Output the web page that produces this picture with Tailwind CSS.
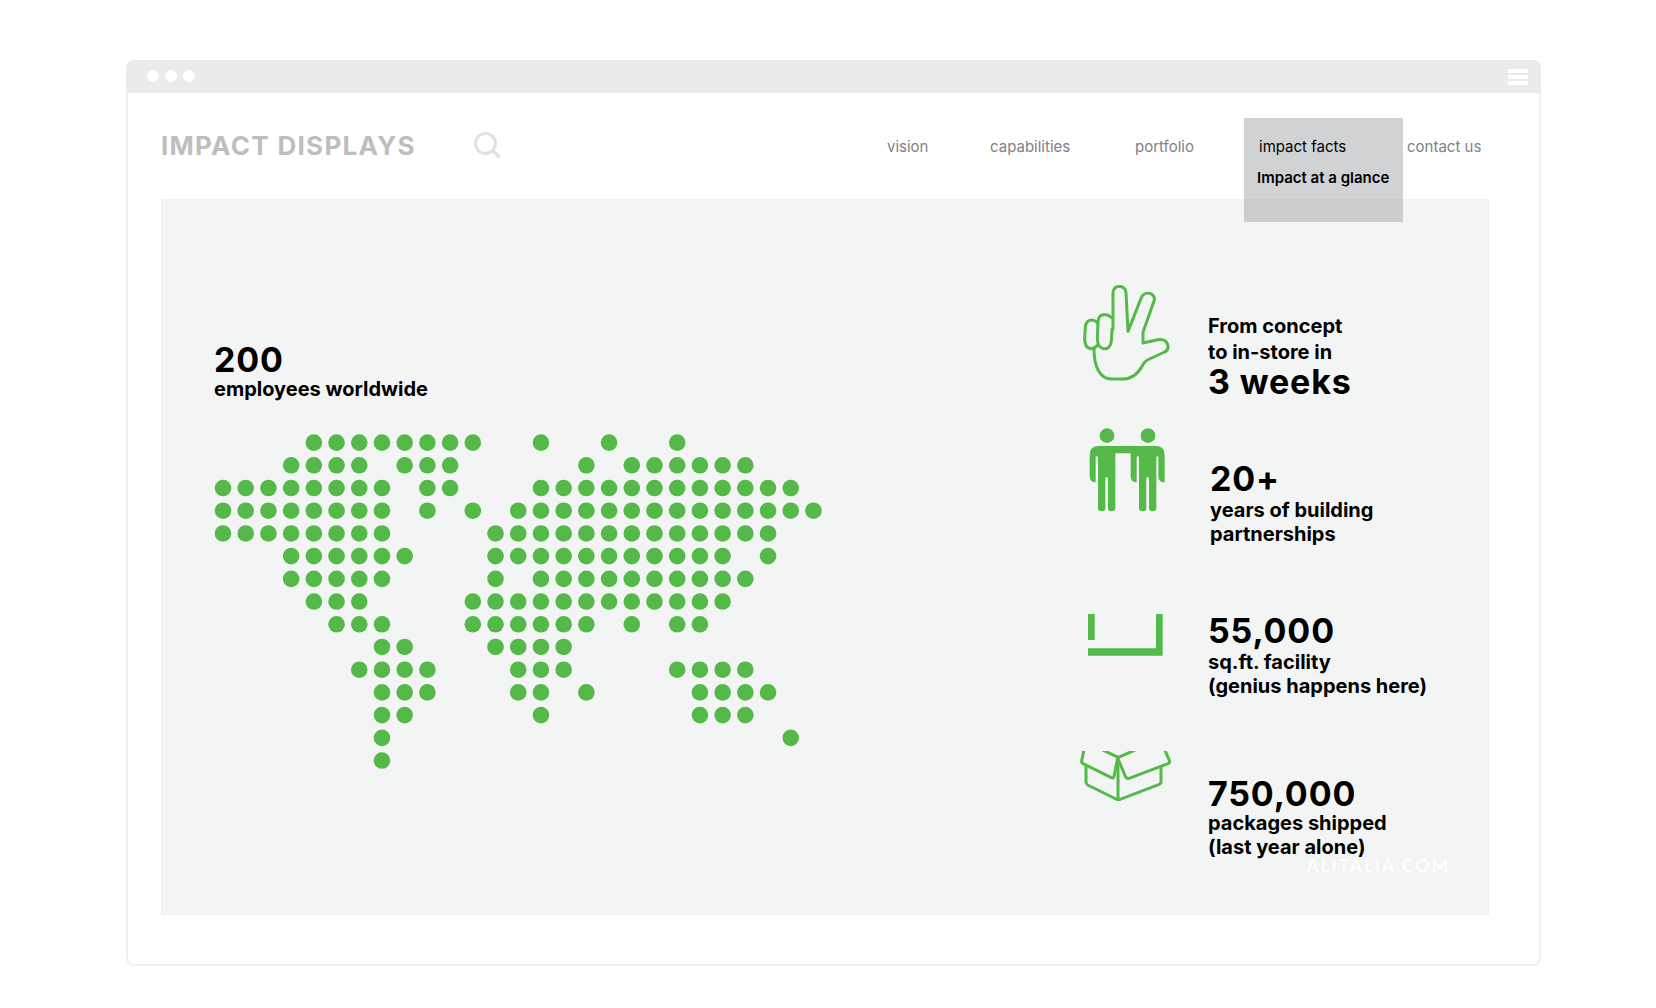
<!DOCTYPE html>
<html lang="en">
<head>
    <meta charset="UTF-8">
    <meta name="viewport" content="width=device-width, initial-scale=1.0">
    <title>Impact Displays - Impact at a glance</title>
    <script src="https://cdn.jsdelivr.net/npm/@tailwindcss/browser@4"></script>
</head>
<body class="bg-white text-black font-['Inter','Open_Sans',sans-serif] pt-[60px] pb-10 pl-[126px] pr-[115px]">
    <div class="rounded-lg border-x-2 border-b-2 border-[#f0f0f1]">
        <!-- window bar -->
        <div class="-mx-0.5 h-[33px] rounded-t-lg bg-[#eaebed] flex items-center justify-between pl-[21px] pr-[13px]">
            <div class="flex gap-1.5 pb-0.5">
                <span class="size-3 rounded-full bg-white"></span>
                <span class="size-3 rounded-full bg-white"></span>
                <span class="size-3 rounded-full bg-white"></span>
            </div>
            <button type="button" aria-label="Menu" class="flex flex-col gap-0.5">
                <span class="h-1 w-5 bg-white"></span>
                <span class="h-1 w-5 bg-white"></span>
                <span class="h-1 w-5 bg-white"></span>
            </button>
        </div>

        <header class="h-[106px] pl-[33px] pr-14 flex items-start justify-between">
            <div class="flex items-center gap-[57px] pt-9">
                <h1 class="text-[26px] leading-[34px] font-bold tracking-wider text-[#bdbec0]">IMPACT DISPLAYS</h1>
                <button type="button" aria-label="Search" class="pb-0.5">
                    <svg class="w-7 h-7" viewBox="0 0 28 28" fill="none" stroke="#e1e2e3" stroke-width="3">
                        <circle cx="12.5" cy="12.5" r="10"/>
                        <path d="M19.5 19.5l7 7" stroke-width="3.5"/>
                    </svg>
                </button>
            </div>
            <nav class="pt-[25px] text-[15px] leading-5 text-[#808184]">
                <ul class="grid grid-cols-[103px_145px_109px_163px_76px]">
                    <li class="pt-[19px]"><a href="#">vision</a></li>
                    <li class="pt-[19px]"><a href="#">capabilities</a></li>
                    <li class="pt-[19px]"><a href="#">portfolio</a></li>
                    <li class="relative">
                        <div class="absolute top-0 left-0 z-10 w-[159px] h-[104px] bg-[#a3a5a9]/50 pt-[19px] pl-[13px] text-black whitespace-nowrap">
                            <a href="#" class="block pl-0.5">impact facts</a>
                            <a href="#" class="block pt-[11px] font-semibold">Impact at a glance</a>
                        </div>
                    </li>
                    <li class="pt-[19px] whitespace-nowrap"><a href="#">contact us</a></li>
                </ul>
            </nav>
        </header>

        <main class="relative ml-[33px] mr-[50px] mb-[49px] min-h-[716px] border border-[#f0f1f1] bg-[#f3f5f5] flex justify-between">
            <section class="pl-[52px] pt-[143px]">
                <h2 class="text-[34px] leading-[34px] font-bold tracking-wide">200</h2>
                <p class="text-xl leading-6 font-bold">employees worldwide</p>
                <svg id="map" class="mt-[33px] w-[608px] h-[335px]" viewBox="0 0 608 335" fill="#54b948" role="img" aria-label="World map"></svg>
            </section>

            <section class="w-[408px] pt-[85px]">
                <div class="flex h-[143px]">
                    <div class="w-32">
                        <svg class="w-24 h-24" viewBox="30 48 288 288" fill="none" stroke="#54b948" stroke-width="9" stroke-linejoin="round" stroke-linecap="round">
                            <path d="M129 180V71C129 46 167 46 168 71L174 187L213 88C224 61 260 73 252 96L219 190V222L263 212C282 208 293 219 294 231C295 241 291 246 284 249L232 273C224 277 222 281 217 290C203 316 184 330 158 330H124C90 330 72 294 72 240"/>
                            <path d="M125 146C110 133 86 131 84 158L82 209C82 246 120 250 124 217L126 181"/>
                            <path d="M82 160C65 147 48 153 46 174L44 208C44 232 53 239 64 239C73 239 78 235 82 228"/>
                        </svg>
                    </div>
                    <div class="pt-7">
                        <p class="text-xl leading-[26px] font-bold">From concept<br>to in-store in</p>
                        <h2 class="text-[34px] leading-[34px] font-bold tracking-wide">3 weeks</h2>
                    </div>
                </div>

                <div class="flex h-[186px]">
                    <div class="w-[130px]">
                        <svg class="w-24 h-[84px]" viewBox="30 27 288 252" fill="#54b948">
                            <circle cx="111" cy="50" r="22"/>
                            <circle cx="234" cy="50" r="22"/>
                            <path d="M86 81H258Q284 81 284 108V190Q265 190 265 172V116Q265 112 262 112Q259 112 259 116V267Q259 277 248 277Q237 277 237 267V179Q237 174 233 174Q229 174 229 179V267Q229 277 218 277Q207 277 207 267V116Q207 112 204 112Q200 112 200 116V190Q182 190 182 172V103H136V267Q136 277 125 277Q114 277 114 267V179Q114 174 110 174Q106 174 106 179V267Q106 277 95 277Q84 277 84 267V116Q84 112 80 112Q77 112 77 116V190Q59 190 59 172V108Q59 81 86 81Z"/>
                        </svg>
                    </div>
                    <div class="pt-[34px]">
                        <h2 class="text-[34px] leading-[34px] font-bold tracking-wide">20+</h2>
                        <p class="pt-0.5 text-xl leading-6 font-bold">years of building<br>partnerships</p>
                    </div>
                </div>

                <div class="flex h-[137px]">
                    <div class="w-32">
                        <svg class="w-24 h-[42px]" viewBox="30 45 288 126" fill="#54b948">
                            <path d="M54 45h20v78H54zM258 45h20v125H54v-22h204z"/>
                        </svg>
                    </div>
                    <div>
                        <h2 class="text-[34px] leading-[34px] font-bold tracking-wide">55,000</h2>
                        <p class="pt-0.5 text-xl leading-6 font-bold">sq.ft. facility<br>(genius happens here)</p>
                    </div>
                </div>

                <div class="flex">
                    <div class="w-32">
                        <svg class="w-24 h-[50px]" viewBox="30 36 288 150" fill="none" stroke="#54b948" stroke-width="9" stroke-linejoin="round">
                            <path d="M42 32L35 66Q34 71 39 74L124 116Q131 119 132 112L143 57L166 112Q169 120 177 118L294 74Q301 71 298 64L284 32"/>
                            <path d="M96 32L145 55L198 32M144 56V182M48 78V130Q48 135 53 138L138 180Q144 183 150 181L266 137Q273 134 273 128V82"/>
                        </svg>
                    </div>
                    <div class="pt-[26px]">
                        <h2 class="text-[34px] leading-[34px] font-bold tracking-wide">750,000</h2>
                        <p class="text-xl leading-6 font-bold">packages shipped<br>(last year alone)</p>
                    </div>
                </div>
            </section>

            <span class="absolute right-[38px] bottom-[37px] text-lg leading-6 font-medium tracking-widest text-white font-['Lato',sans-serif]">ALITALIA.COM</span>
        </main>
    </div>

    <script>
        // one string per latitude, "o" is a dot
        const rows = [
            "....oooooooo..o..o..o......",
            "...oooo.ooo.....o.oooooo...",
            "oooooooo.oo...oooooooooooo.",
            "oooooooo.o.o.oooooooooooooo",
            "oooooooo....ooooooooooooo..",
            "...oooooo...ooooooooooo.o..",
            "...ooooo....o.oooooooooo...",
            "....ooo....oooooooooooo....",
            ".....ooo...oooooo.o.oo.....",
            ".......oo...oooo...........",
            "......oooo...ooo....oooo...",
            ".......ooo...oo.o....oooo..",
            ".......oo.....o......ooo...",
            ".......o.................o.",
            ".......o..................."
        ];
        const step = 22.71;
        const map = document.getElementById("map");

        rows.forEach((row, y) => {
            [...row].forEach((cell, x) => {
                if (cell !== "o") return;
                const dot = document.createElementNS("http://www.w3.org/2000/svg", "circle");
                dot.setAttribute("cx", 9 + x * step);
                dot.setAttribute("cy", 8.6 + y * step);
                dot.setAttribute("r", 8.3);
                map.appendChild(dot);
            });
        });
    </script>
</body>
</html>
